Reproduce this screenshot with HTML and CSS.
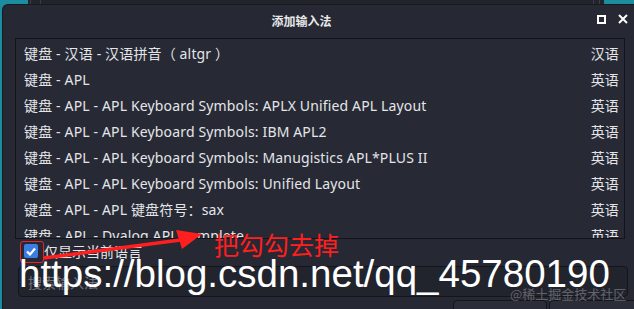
FILE: index.html
```html
<!DOCTYPE html>
<html lang="zh-CN">
<head>
    <meta charset="UTF-8">
    <title>添加输入法</title>
    <link rel="stylesheet" href="styles.css">
</head>
<body>
    <div class="behind">
        <span class="behind-line l1"></span>
        <span class="behind-line l2"></span>
        <span class="behind-line r1"></span>
        <span class="behind-line r2"></span>
    </div>

    <div class="dialog">
        <div class="titlebar">
            <span class="title">添加输入法</span>
            <span class="win-btns">
                <span class="max-btn"></span>
                <svg class="close-btn" width="10" height="10" viewBox="0 0 10 10">
                    <path d="M1 1 L9 9 M9 1 L1 9" stroke="#fff" stroke-width="2"/>
                </svg>
            </span>
        </div>

        <div class="list">
            <div class="row"><span>键盘 - 汉语 - 汉语拼音（ altgr ）</span><span>汉语</span></div>
            <div class="row"><span>键盘 - APL</span><span>英语</span></div>
            <div class="row"><span>键盘 - APL - APL Keyboard Symbols: APLX Unified APL Layout</span><span>英语</span></div>
            <div class="row"><span>键盘 - APL - APL Keyboard Symbols: IBM APL2</span><span>英语</span></div>
            <div class="row"><span>键盘 - APL - APL Keyboard Symbols: Manugistics APL*PLUS II</span><span>英语</span></div>
            <div class="row"><span>键盘 - APL - APL Keyboard Symbols: Unified Layout</span><span>英语</span></div>
            <div class="row"><span>键盘 - APL - APL 键盘符号：sax</span><span>英语</span></div>
            <div class="row"><span>键盘 - APL - Dyalog APL complete</span><span>英语</span></div>
        </div>

        <label class="only-current">
            <span class="check">
                <svg width="10" height="9" viewBox="0 0 10 9">
                    <path d="M1 4.5 L4 7.5 L9 1.5" stroke="#fff" stroke-width="2.2" fill="none"/>
                </svg>
            </span>
            仅显示当前语言
        </label>

        <div class="search">搜索输入法</div>

        <div class="buttons">
            <span class="btn"></span>
            <span class="btn"></span>
        </div>
    </div>

    <!-- annotation drawn on top of the screenshot -->
    <div class="mark-box"></div>
    <svg class="arrow" width="200" height="40" viewBox="0 0 200 40">
        <path d="M2 29 L146 10" stroke="#ff1f1f" stroke-width="3.5"/>
        <path d="M134 1 L160 5 L140 20 Z" fill="#ff1f1f"/>
    </svg>
    <div class="note">把勾勾去掉</div>

    <div class="watermark">https://blog.csdn.net/qq_45780190</div>
    <div class="juejin">@稀土掘金技术社区</div>
</body>
</html>
```

FILE: styles.css
```css
body {
    margin: 0;
    width: 634px;
    height: 309px;
    overflow: hidden;
    background: #1c8d9e;
    font-family: "Noto Sans", "Noto Sans CJK SC", sans-serif;
    color: #e4e5e8;
    position: relative;
}
.behind {
    position: absolute;
    left: 28px;
    right: 30px;
    top: 0;
    height: 6px;
    background: #22242c;
}
.behind-line {
    position: absolute;
    top: 0;
    width: 1px;
    height: 6px;
    background: #3a3d48;
}
.l1 { left: 2px; }
.l2 { left: 12px; }
.r1 { right: 10px; }
.r2 { right: 4px; }

.dialog {
    position: relative;
    margin: 4px 0 0 2px;
    width: 660px;
    height: 320px;
    background: #262833;
    border-top-left-radius: 6px;
    border-top: 1px solid #191a20;
    border-left: 1px solid #191a20;
    box-sizing: border-box;
}
.titlebar {
    height: 33px;
    display: flex;
    align-items: center;
    justify-content: center;
    position: relative;
}
.title {
    font-size: 12px;
    font-weight: bold;
    color: #e8e8ea;
    margin-left: -62px;
    margin-top: -2px;
}
.win-btns {
    position: absolute;
    left: 594px;
    top: 9px;
    display: flex;
    align-items: center;
    gap: 12px;
}
.max-btn {
    width: 5px;
    height: 5px;
    border: 2px solid #fff;
}
.list {
    margin-left: 12px;
    width: 610px;
    height: 201px;
    border: 1px solid #14151a;
    background: #272a35;
    box-sizing: border-box;
    padding: 1px 5px 0 8px;
    overflow: hidden;
    font-size: 14px;
    letter-spacing: 0.15px;
}
.row {
    height: 26px;
    display: flex;
    align-items: center;
    justify-content: space-between;
    white-space: nowrap;
}
.only-current {
    display: flex;
    align-items: center;
    gap: 6px;
    margin: 5px 0 0 21px;
    font-size: 14px;
    height: 14px;
}
.check {
    width: 14px;
    height: 14px;
    background: #3a7ee4;
    border-radius: 2px;
    display: flex;
    align-items: center;
    justify-content: center;
}
.search {
    margin: 8px 0 0 15px;
    width: 610px;
    height: 31px;
    border: 1px solid #14151a;
    border-radius: 4px;
    background: #22242d;
    box-sizing: border-box;
    padding: 0 9px;
    display: flex;
    align-items: center;
    font-size: 14px;
    color: #70737c;
}
.buttons {
    display: flex;
    gap: 2px;
    margin: 3px 0 0 450px;
}
.btn {
    width: 92px;
    height: 20px;
    border: 1px solid #14151a;
    border-radius: 4px;
    background: #2b2d38;
}

.mark-box {
    position: absolute;
    left: 20px;
    top: 241px;
    width: 22px;
    height: 20px;
    border: 1px solid #e8262a;
    border-radius: 3px;
}
.arrow {
    position: absolute;
    left: 42px;
    top: 229px;
}
.note {
    position: absolute;
    left: 214px;
    top: 227px;
    font-family: "Noto Sans CJK SC", sans-serif;
    font-size: 25px;
    line-height: 34px;
    color: #ff1f1f;
}
.watermark {
    position: absolute;
    left: 19px;
    top: 251px;
    font-family: "Liberation Sans", Arial, sans-serif;
    font-size: 38.5px;
    line-height: 46px;
    color: #ffffff;
    white-space: nowrap;
}
.juejin {
    position: absolute;
    left: 510px;
    top: 284px;
    font-family: "Noto Sans CJK SC", serif;
    font-size: 13px;
    color: rgba(200, 200, 205, 0.4);
    white-space: nowrap;
}
```
